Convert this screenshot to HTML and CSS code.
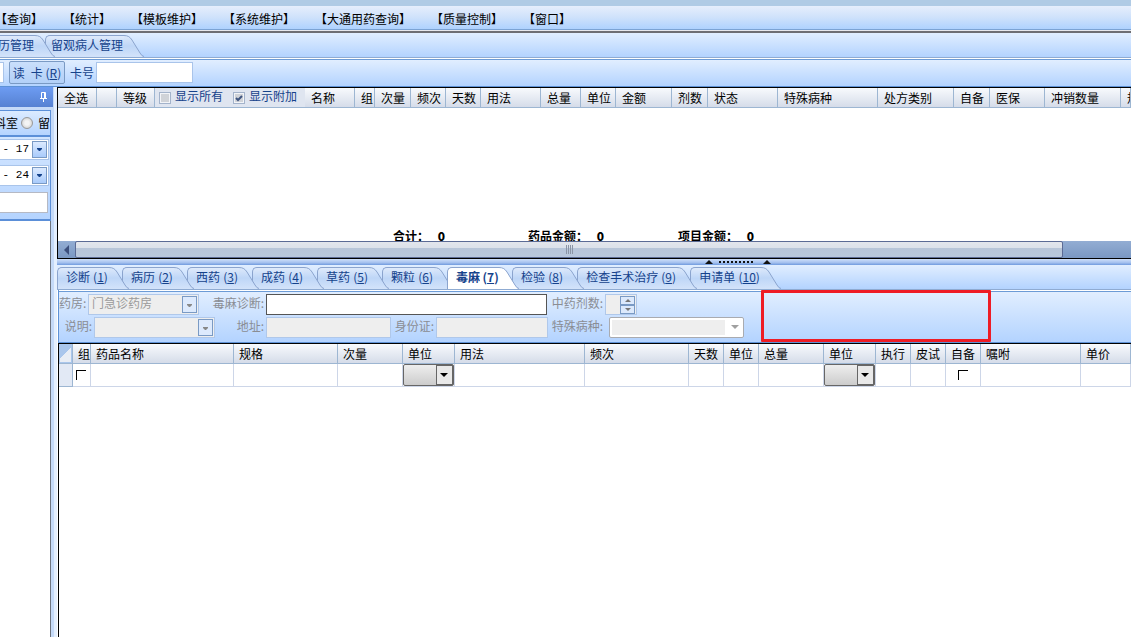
FILE: index.html
```html
<!DOCTYPE html>
<html lang="zh-CN">
<head>
    <meta charset="UTF-8">
    <meta name="viewport" content="width=device-width, initial-scale=1.0">
    <title>留观病人管理</title>
    <link rel="stylesheet" href="styles.css">
</head>

<body>

    <div class="title-strip"></div>

    <nav class="menu-bar">
        <button type="button">【查询】</button>
        <button type="button">【统计】</button>
        <button type="button">【模板维护】</button>
        <button type="button">【系统维护】</button>
        <button type="button">【大通用药查询】</button>
        <button type="button">【质量控制】</button>
        <button type="button">【窗口】</button>
    </nav>

    <!-- shared slanted edge of every tab -->
    <svg class="defs" width="0" height="0">
        <defs>
            <linearGradient id="tabFill" x1="0" y1="0" x2="0" y2="1">
                <stop offset="0" stop-color="#dfeafb"/>
                <stop offset="0.5" stop-color="#bed6f7"/>
                <stop offset="1" stop-color="#d3e3fa"/>
            </linearGradient>
            <symbol id="slope" viewBox="0 0 20 22">
                <path class="slope-fill" d="M0 0 C4 0 6 2 8 5 L16 18 Q18 22 20 22 L0 22 Z"/>
                <path class="slope-line" d="M0 0.5 C4 0.5 6 2 8 5 L16 18 Q18 21.5 20 21.5"/>
            </symbol>
        </defs>
    </svg>

    <nav class="tabs page-tabs">
        <button type="button" class="tab"><span>病历管理</span><svg width="20" height="22"><use href="#slope"/></svg></button>
        <button type="button" class="tab"><span>留观病人管理</span><svg width="20" height="22"><use href="#slope"/></svg></button>
    </nav>

    <div class="toolbar">
        <input type="text" class="id-input" aria-label="编号">
        <button type="button" class="read-btn">读&ensp;卡 (<u>R</u>)</button>
        <label for="cardNo">卡号</label>
        <input type="text" id="cardNo" class="card-input">
    </div>

    <div class="workspace">
        <aside class="side">
            <div class="side-head">
                <svg width="9" height="11" viewBox="0 0 9 11">
                    <path d="M2.5 6 V0.5 H6.5 V6 M5.5 0.5 V6 M1 6.5 H8 M4.5 7 V10" fill="none" stroke="#fff"/>
                </svg>
            </div>
            <div class="filter">
                <div class="dept">
                    <label for="deptKeep">科室</label>
                    <input type="radio" id="deptKeep" name="dept">
                    <label for="deptKeep">留</label>
                </div>
                <div class="date">
                    <input type="text" value="- 17" aria-label="开始日期">
                    <button type="button" aria-label="选择开始日期"><svg width="5" height="3"><path d="M0 0H5V1L3 3H2L0 1Z" fill="#15428b"/></svg></button>
                </div>
                <div class="date">
                    <input type="text" value="- 24" aria-label="结束日期">
                    <button type="button" aria-label="选择结束日期"><svg width="5" height="3"><path d="M0 0H5V1L3 3H2L0 1Z" fill="#15428b"/></svg></button>
                </div>
                <input type="text" class="search" aria-label="查找">
            </div>
            <div class="tree"></div>
        </aside>

        <main class="main">
            <section class="orders">
                <table class="grid">
                    <colgroup>
                        <col class="w39"><col class="w20"><col class="w38"><col class="w200"><col class="w20">
                        <col class="w36"><col class="w35"><col class="w35"><col class="w60"><col class="w40">
                        <col class="w35"><col class="w56"><col class="w36"><col class="w70"><col class="w100">
                        <col class="w76"><col class="w36"><col class="w55"><col class="w76"><col>
                    </colgroup>
                    <thead>
                        <tr>
                            <th>全选</th>
                            <th></th>
                            <th>等级</th>
                            <th class="name-col">
                                <div class="name-head">
                                    <div class="show-opts">
                                        <input type="checkbox" id="showAll" class="tick"><label for="showAll">显示所有</label>
                                        <input type="checkbox" id="showExtra" class="tick" checked><label for="showExtra">显示附加</label>
                                    </div>
                                    <span>名称</span>
                                </div>
                            </th>
                            <th>组</th>
                            <th>次量</th>
                            <th>频次</th>
                            <th>天数</th>
                            <th>用法</th>
                            <th>总量</th>
                            <th>单位</th>
                            <th>金额</th>
                            <th>剂数</th>
                            <th>状态</th>
                            <th>特殊病种</th>
                            <th>处方类别</th>
                            <th>自备</th>
                            <th>医保</th>
                            <th>冲销数量</th>
                            <th>规格</th>
                        </tr>
                    </thead>
                </table>
                <div class="totals">
                    <span>合计： <b>0</b></span>
                    <span>药品金额： <b>0</b></span>
                    <span>项目金额： <b>0</b></span>
                </div>
                <div class="scrollbar">
                    <button type="button" aria-label="向左滚动"><svg width="5" height="10"><path d="M5 0V10L0 5Z" fill="#3c4f7c"/></svg></button>
                    <div class="thumb"><i></i><i></i><i></i><i></i></div>
                </div>
            </section>

            <div class="splitter">
                <svg width="66" height="5" viewBox="0 0 66 5">
                    <path d="M0 4 H8 L4 0 Z M58 4 H66 L62 0 Z" fill="#111"/>
                    <path d="M14 2 H50" stroke="#111" stroke-width="2" stroke-dasharray="2 2"/>
                </svg>
            </div>

            <nav class="tabs order-tabs">
                <button type="button" class="tab"><span>诊断</span><span class="key">(<u>1</u>)</span><svg width="20" height="22"><use href="#slope"/></svg></button>
                <button type="button" class="tab"><span>病历</span><span class="key">(<u>2</u>)</span><svg width="20" height="22"><use href="#slope"/></svg></button>
                <button type="button" class="tab"><span>西药</span><span class="key">(<u>3</u>)</span><svg width="20" height="22"><use href="#slope"/></svg></button>
                <button type="button" class="tab"><span>成药</span><span class="key">(<u>4</u>)</span><svg width="20" height="22"><use href="#slope"/></svg></button>
                <button type="button" class="tab"><span>草药</span><span class="key">(<u>5</u>)</span><svg width="20" height="22"><use href="#slope"/></svg></button>
                <button type="button" class="tab"><span>颗粒</span><span class="key">(<u>6</u>)</span><svg width="20" height="22"><use href="#slope"/></svg></button>
                <button type="button" class="tab active"><span>毒麻</span><span class="key">(<u>7</u>)</span><svg width="20" height="22"><use href="#slope"/></svg></button>
                <button type="button" class="tab"><span>检验</span><span class="key">(<u>8</u>)</span><svg width="20" height="22"><use href="#slope"/></svg></button>
                <button type="button" class="tab"><span>检查手术治疗</span><span class="key">(<u>9</u>)</span><svg width="20" height="22"><use href="#slope"/></svg></button>
                <button type="button" class="tab"><span>申请单</span><span class="key wide">(<u>10</u>)</span><svg width="20" height="22"><use href="#slope"/></svg></button>
            </nav>

            <form class="order-form">
                <div class="fields">
                    <div class="row">
                        <label for="pharmacy" class="w29">药房:</label>
                        <select id="pharmacy" class="combo w111" disabled><option>门急诊药房</option></select>
                        <label for="drugDiag" class="w67">毒麻诊断:</label>
                        <input type="text" id="drugDiag" class="diag w281">
                        <label for="doses" class="w58">中药剂数:</label>
                        <div class="spin">
                            <input type="text" id="doses" disabled>
                            <div class="spin-btns">
                                <button type="button" aria-label="增加" disabled><svg width="6" height="3"><path d="M0 3H6L3 0Z" fill="#777"/></svg></button>
                                <button type="button" aria-label="减少" disabled><svg width="6" height="3"><path d="M0 0H6L3 3Z" fill="#777"/></svg></button>
                            </div>
                        </div>
                    </div>
                    <div class="row">
                        <label for="note" class="w35">说明:</label>
                        <select id="note" class="combo w121" disabled><option></option></select>
                        <label for="address" class="w51">地址:</label>
                        <input type="text" id="address" class="w125" disabled>
                        <label for="idCard" class="w45">身份证:</label>
                        <input type="text" id="idCard" class="w112" disabled>
                        <label for="special" class="w61 special">特殊病种:</label>
                        <select id="special" class="flat w135" disabled><option></option></select>
                    </div>
                </div>
                <div class="highlight"></div>
            </form>

            <section class="detail">
                <table class="grid">
                    <colgroup>
                        <col class="w14"><col class="w18"><col class="w143"><col class="w104"><col class="w65">
                        <col class="w52"><col class="w130"><col class="w104"><col class="w35"><col class="w35">
                        <col class="w65"><col class="w52"><col class="w35"><col class="w35"><col class="w35">
                        <col class="w100"><col>
                    </colgroup>
                    <thead>
                        <tr>
                            <th class="corner"></th>
                            <th>组</th>
                            <th>药品名称</th>
                            <th>规格</th>
                            <th>次量</th>
                            <th>单位</th>
                            <th>用法</th>
                            <th>频次</th>
                            <th>天数</th>
                            <th>单位</th>
                            <th>总量</th>
                            <th>单位</th>
                            <th>执行</th>
                            <th>皮试</th>
                            <th>自备</th>
                            <th>嘱咐</th>
                            <th>单价</th>
                        </tr>
                    </thead>
                    <tbody>
                        <tr>
                            <td class="marker"></td>
                            <td class="check-left"><input type="checkbox" class="cell-check" aria-label="组"></td>
                            <td></td>
                            <td></td>
                            <td></td>
                            <td><select class="cell-select" aria-label="次量单位"><option></option></select></td>
                            <td></td>
                            <td></td>
                            <td></td>
                            <td></td>
                            <td></td>
                            <td><select class="cell-select" aria-label="总量单位"><option></option></select></td>
                            <td></td>
                            <td></td>
                            <td class="check-mid"><input type="checkbox" class="cell-check" aria-label="自备"></td>
                            <td></td>
                            <td></td>
                        </tr>
                    </tbody>
                </table>
            </section>
        </main>
    </div>

</body>
</html>
```
FILE: styles.css
```css
* {
    margin: 0;
    padding: 0;
    box-sizing: border-box;
}

body {
    display: flex;
    flex-direction: column;
    height: 100vh;
    overflow: hidden;
    background: #fff;
    color: #000;
    font-family: "Noto Sans CJK SC", sans-serif;
    font-size: 12px;
    line-height: 16px;
}

button,
input,
select {
    font: inherit;
    color: inherit;
    border-radius: 0;
}

button {
    border: none;
    background: none;
    white-space: nowrap;
}

svg {
    display: block;
    flex: none;
}

.defs {
    height: 0;
}

/* top bars */
.title-strip {
    flex: none;
    height: 6px;
    background: #b0cbe5;
}

.menu-bar {
    flex: none;
    display: flex;
    gap: 20px;
    height: 27px;
    margin-left: -5px;
    padding-top: 1px;
    background: linear-gradient(#e6eefc, #cfe2fb 45%, #a9cfff);
    border-bottom: 2px solid #6e6e73;
    box-shadow: inset 0 -1px #e8e8ec, inset 0 -2px #7ba3d4;
}

.tabs {
    flex: none;
    display: flex;
    align-items: flex-end;
    background: linear-gradient(#e1eeff, #b3d3ff);
    border-bottom: 1px solid #8fabd2;
}

.page-tabs {
    height: 25px;
    padding-top: 2px;
}

.page-tabs .tab:first-child {
    margin-left: -20px;
}

.tab {
    display: flex;
    height: 22px;
    color: #15428b;
}

.tab span {
    height: 22px;
    line-height: 17px;
    border-top: 1px solid #8ba4ce;
    background: linear-gradient(#dfeafb, #bed6f7 50%, #d3e3fa);
}

.tab span:first-child {
    padding-left: 8px;
    border-left: 1px solid #8ba4ce;
    border-top-left-radius: 5px;
}

.page-tabs .tab span:first-child {
    padding: 0 1px 0 5px;
}

/* the slope lies over the left edge of the next tab */
.tab svg {
    z-index: 1;
    margin-right: -7px;
}

.page-tabs .tab svg {
    margin-right: -10px;
}

.slope-fill {
    fill: var(--tab-fill, url(#tabFill));
}

.slope-line {
    fill: none;
    stroke: #8ba4ce;
}

.key {
    width: 19px;
    padding-left: 2px;
}

.key.wide {
    width: 26px;
}

.toolbar {
    flex: none;
    display: flex;
    align-items: center;
    height: 29px;
    border-top: 1px solid #fff;
    border-bottom: 1px solid #5e92d6;
    background: linear-gradient(#6c9bd6 1px, #e1eeff 1px, #b3d3ff);
    color: #15428b;
}

.toolbar input {
    height: 21px;
    border: 1px solid #a9c4ea;
    background: #fff;
}

.toolbar .id-input {
    width: 4px;
    border-left: none;
}

.read-btn {
    width: 56px;
    height: 23px;
    margin: 0 5px;
    border: 1px solid #7a9ac4;
    border-radius: 2px;
    background: linear-gradient(#cadffb, #b2d0f8);
}

.card-input {
    width: 97px;
    margin-left: 2px;
    padding: 0 4px;
}

/* left panel */
.workspace {
    flex: 1;
    display: flex;
    min-height: 0;
}

.side {
    flex: none;
    display: flex;
    flex-direction: column;
    width: 57px;
    padding-right: 6px;
    background: linear-gradient(to right, #c5daf8 54px, #e4effe 54px);
}

.side-head {
    flex: none;
    display: flex;
    justify-content: flex-end;
    align-items: center;
    height: 20px;
    margin: 0 -2px 3px 0;
    padding-right: 5px;
    background: linear-gradient(#6d9cf2, #5681d2);
}

.filter {
    flex: none;
    display: flex;
    flex-direction: column;
    height: 111px;
    border: 1px solid #5b8fd8;
    border-width: 1px 1px 2px 0;
    background: linear-gradient(#dcebff, #b5d4ff);
}

.dept {
    flex: none;
    display: flex;
    justify-content: flex-end;
    align-items: center;
    height: 26px;
    margin-bottom: 2px;
    overflow: hidden;
    white-space: nowrap;
    border-bottom: 2px solid #5b8fd8;
    background: linear-gradient(#dcebff, #b5d4ff);
}

.dept label {
    flex: none;
}

.dept input {
    flex: none;
    appearance: none;
    width: 12px;
    height: 12px;
    margin: 0 5px 0 3px;
    border: 1px solid #999;
    border-radius: 50%;
    background: radial-gradient(#f4f4f4 30%, #c4c4c4);
}

.date {
    flex: none;
    display: flex;
    height: 21px;
    margin: 0 1px 5px 0;
    padding: 1px;
    border: 1px solid #a9c4ea;
    border-left: none;
    background: #fff;
}

.date input {
    flex: 1;
    min-width: 0;
    padding: 0 3px 2px 0;
    border: none;
    font-family: "Liberation Mono", monospace;
    font-size: 11px;
    text-align: right;
}

.date button {
    display: flex;
    justify-content: center;
    align-items: center;
    width: 15px;
    height: 17px;
    border: 1px solid #7a9ac4;
    background: linear-gradient(#dceaff, #a9cbfb);
}

.search {
    width: 48px;
    height: 21px;
    margin-top: 1px;
    border: 1px solid #b5b9c4;
    border-left: none;
    background: #fff;
}

.tree {
    flex: 1;
    border-right: 1px solid #6f7580;
    background: #fff;
}

/* grids */
.main {
    flex: 1;
    display: flex;
    flex-direction: column;
    min-width: 0;
}

.orders {
    flex: none;
    display: flex;
    flex-direction: column;
    height: 172px;
    border: 1px solid #000;
    border-right: none;
    overflow: hidden;
}

.grid {
    flex: none;
    width: 100%;
    table-layout: fixed;
    border-collapse: separate;
    border-spacing: 0;
}

.grid th {
    height: 20px;
    padding-left: 6px;
    overflow: hidden;
    white-space: nowrap;
    text-align: left;
    font-weight: normal;
    border-right: 1px solid #9db6d2;
    border-bottom: 1px solid #9db6d2;
    background: linear-gradient(#f8fafd, #d5dce9);
}

.grid td {
    height: 23px;
    border-right: 1px solid #cdd6e8;
    border-bottom: 1px solid #cdd6e8;
}

.grid .name-col {
    padding-left: 0;
}

.name-head {
    display: flex;
    align-items: center;
    gap: 6px;
    height: 19px;
}

.show-opts {
    display: flex;
    align-items: center;
    width: 150px;
    height: 19px;
    padding-left: 4px;
    background: #dfe5f0;
    color: #15428b;
}

.show-opts label {
    padding: 0 10px 4px 4px;
}

.tick {
    flex: none;
    appearance: none;
    width: 12px;
    height: 12px;
    border: 1px solid #a3b3cb;
    background: #d0d3d8;
    box-shadow: inset 0 0 0 1px #f2f4f8;
}

.tick:checked {
    background: #d0d3d8 url("data:image/svg+xml,%3Csvg xmlns='http://www.w3.org/2000/svg' viewBox='0 0 10 10'%3E%3Cpath d='M2 5L4 7L8 3' fill='none' stroke='%233f5580' stroke-width='2'/%3E%3C/svg%3E");
}

.totals {
    flex: none;
    display: grid;
    grid-template-columns: 135px 150px 1fr;
    height: 11px;
    margin-top: auto;
    padding-left: 335px;
    overflow: hidden;
    line-height: 12px;
    font-weight: bold;
}

.totals b {
    padding-left: 6px;
}

.scrollbar {
    flex: none;
    display: flex;
    height: 17px;
    padding-right: 68px;
    background: linear-gradient(#93add3, #7a98c3);
}

.scrollbar button {
    display: flex;
    justify-content: center;
    align-items: center;
    width: 17px;
}

.thumb {
    flex: 1;
    display: flex;
    justify-content: center;
    align-items: center;
    gap: 1px;
    border: 1px solid #5b6b95;
    border-radius: 2px;
    background: linear-gradient(#e3e6ec, #dbe1ea 40%, #b7c5d8 40%, #b9c8dc);
}

.thumb i {
    width: 1px;
    height: 9px;
    background: #8b95a5;
}

.splitter {
    flex: none;
    height: 6px;
    padding: 1px 0 0 648px;
    background: linear-gradient(#cfe0fa, #a5c1ee 60%, #6f9ade);
}

.order-tabs {
    height: 25px;
    padding-top: 2px;
}

.order-tabs .tab.active {
    z-index: 2;
    font-weight: bold;
    --tab-fill: #fff;
}

.tab.active span {
    background: #fff;
}

/* order form */
.order-form {
    flex: none;
    display: flex;
    height: 53px;
    margin-left: 1px;
    border-left: 1px solid #5e92d6;
    border-bottom: 1px solid #5e92d6;
    background: linear-gradient(#fff 1px, #6c9bd6 1px, #6c9bd6 2px, #e1eeff 2px, #b3d3ff);
    color: #8a8d94;
}

.fields {
    display: flex;
    flex-direction: column;
    gap: 1px;
    width: 702px;
    padding-top: 3px;
}

.row {
    display: flex;
    align-items: center;
    height: 22px;
}

.row > * {
    flex: none;
}

.row label {
    padding: 0 2px 2px 0;
    text-align: right;
    white-space: nowrap;
}

.row .special {
    padding-right: 6px;
}

.row input,
.row select {
    height: 21px;
    border: 1px solid #b0c8ea;
    background: #eee;
}

.row .diag {
    padding: 0 4px;
    border-color: #555;
    background: #fff;
    color: #000;
}

.row .combo {
    appearance: none;
    padding: 0 0 2px 3px;
    opacity: 1;
    color: #9a9a9a;
    background: #eee url("data:image/svg+xml,%3Csvg xmlns='http://www.w3.org/2000/svg' width='15' height='17'%3E%3Crect x='.5' y='.5' width='14' height='16' fill='%23ddeafd' stroke='%237a9ac4'/%3E%3Cpath d='M5 8h5v1l-2 2h-1l-2-2z' fill='%23888'/%3E%3C/svg%3E") no-repeat right 1px center;
}

.row .flat {
    appearance: none;
    opacity: 1;
    border-color: #a9abb0;
    border-radius: 2px;
    background: linear-gradient(#eee, #eee) 2px 2px / 113px 15px no-repeat,
        #fff url("data:image/svg+xml,%3Csvg xmlns='http://www.w3.org/2000/svg' width='8' height='4'%3E%3Cpath d='M0 0h8L4 4z' fill='%23a0a0a0'/%3E%3C/svg%3E") no-repeat right 4px center;
}

.spin {
    display: flex;
    width: 32px;
    height: 21px;
    padding-right: 1px;
    border: 1px solid #b0c8ea;
    background: #eee;
}

.spin input {
    flex: 1;
    min-width: 0;
    height: 19px;
    border: none;
}

.spin-btns {
    display: flex;
    flex-direction: column;
    padding-top: 1px;
}

.spin-btns button {
    display: flex;
    justify-content: center;
    align-items: center;
    width: 15px;
    height: 9px;
    border: 1px solid #7a9ac4;
    background: #dce9fc;
}

.highlight {
    width: 230px;
    height: 52px;
    border: 3px solid #ee1c25;
    border-radius: 1px;
}

.detail {
    flex: 1;
    border: 1px solid #000;
    border-width: 1px 0 0 1px;
    margin-left: 1px;
    overflow: hidden;
    background: #fff;
}

.detail .grid th {
    padding-left: 5px;
}

.grid .corner {
    background: linear-gradient(135deg, #a9c6ec 50%, #e8edf5 50%);
    box-shadow: inset 0 0 0 1px #a9c6ec;
}

.grid .marker {
    border-color: #9db6d2;
    background: #e2e9f5;
}

.grid .check-left {
    padding-left: 3px;
}

.grid .check-mid {
    text-align: center;
}

.cell-check {
    appearance: none;
    display: block;
    width: 10px;
    height: 10px;
    border: 1px solid #000;
    border-width: 1px 0 0 1px;
    background: #fff;
}

.check-mid .cell-check {
    margin: 0 auto;
}

.cell-select {
    appearance: none;
    display: block;
    width: 51px;
    height: 22px;
    border: 1px solid #666;
    border-radius: 2px;
    background: url("data:image/svg+xml,%3Csvg xmlns='http://www.w3.org/2000/svg' width='17' height='20'%3E%3Crect x='.5' y='.5' width='16' height='19' fill='%23e9e9e9' stroke='%23666'/%3E%3Cpath d='M4 8h8l-4 4z'/%3E%3C/svg%3E") no-repeat right top,
        linear-gradient(#eee, #ccc);
}

/* column and field widths */
.w14 { width: 14px; }
.w18 { width: 18px; }
.w20 { width: 20px; }
.w29 { width: 29px; }
.w35 { width: 35px; }
.w36 { width: 36px; }
.w38 { width: 38px; }
.w39 { width: 39px; }
.w40 { width: 40px; }
.w45 { width: 45px; }
.w51 { width: 51px; }
.w52 { width: 52px; }
.w55 { width: 55px; }
.w56 { width: 56px; }
.w58 { width: 58px; }
.w60 { width: 60px; }
.w61 { width: 61px; }
.w65 { width: 65px; }
.w67 { width: 67px; }
.w70 { width: 70px; }
.w76 { width: 76px; }
.w100 { width: 100px; }
.w104 { width: 104px; }
.w111 { width: 111px; }
.w112 { width: 112px; }
.w121 { width: 121px; }
.w125 { width: 125px; }
.w130 { width: 130px; }
.w135 { width: 135px; }
.w143 { width: 143px; }
.w200 { width: 200px; }
.w281 { width: 281px; }
```
